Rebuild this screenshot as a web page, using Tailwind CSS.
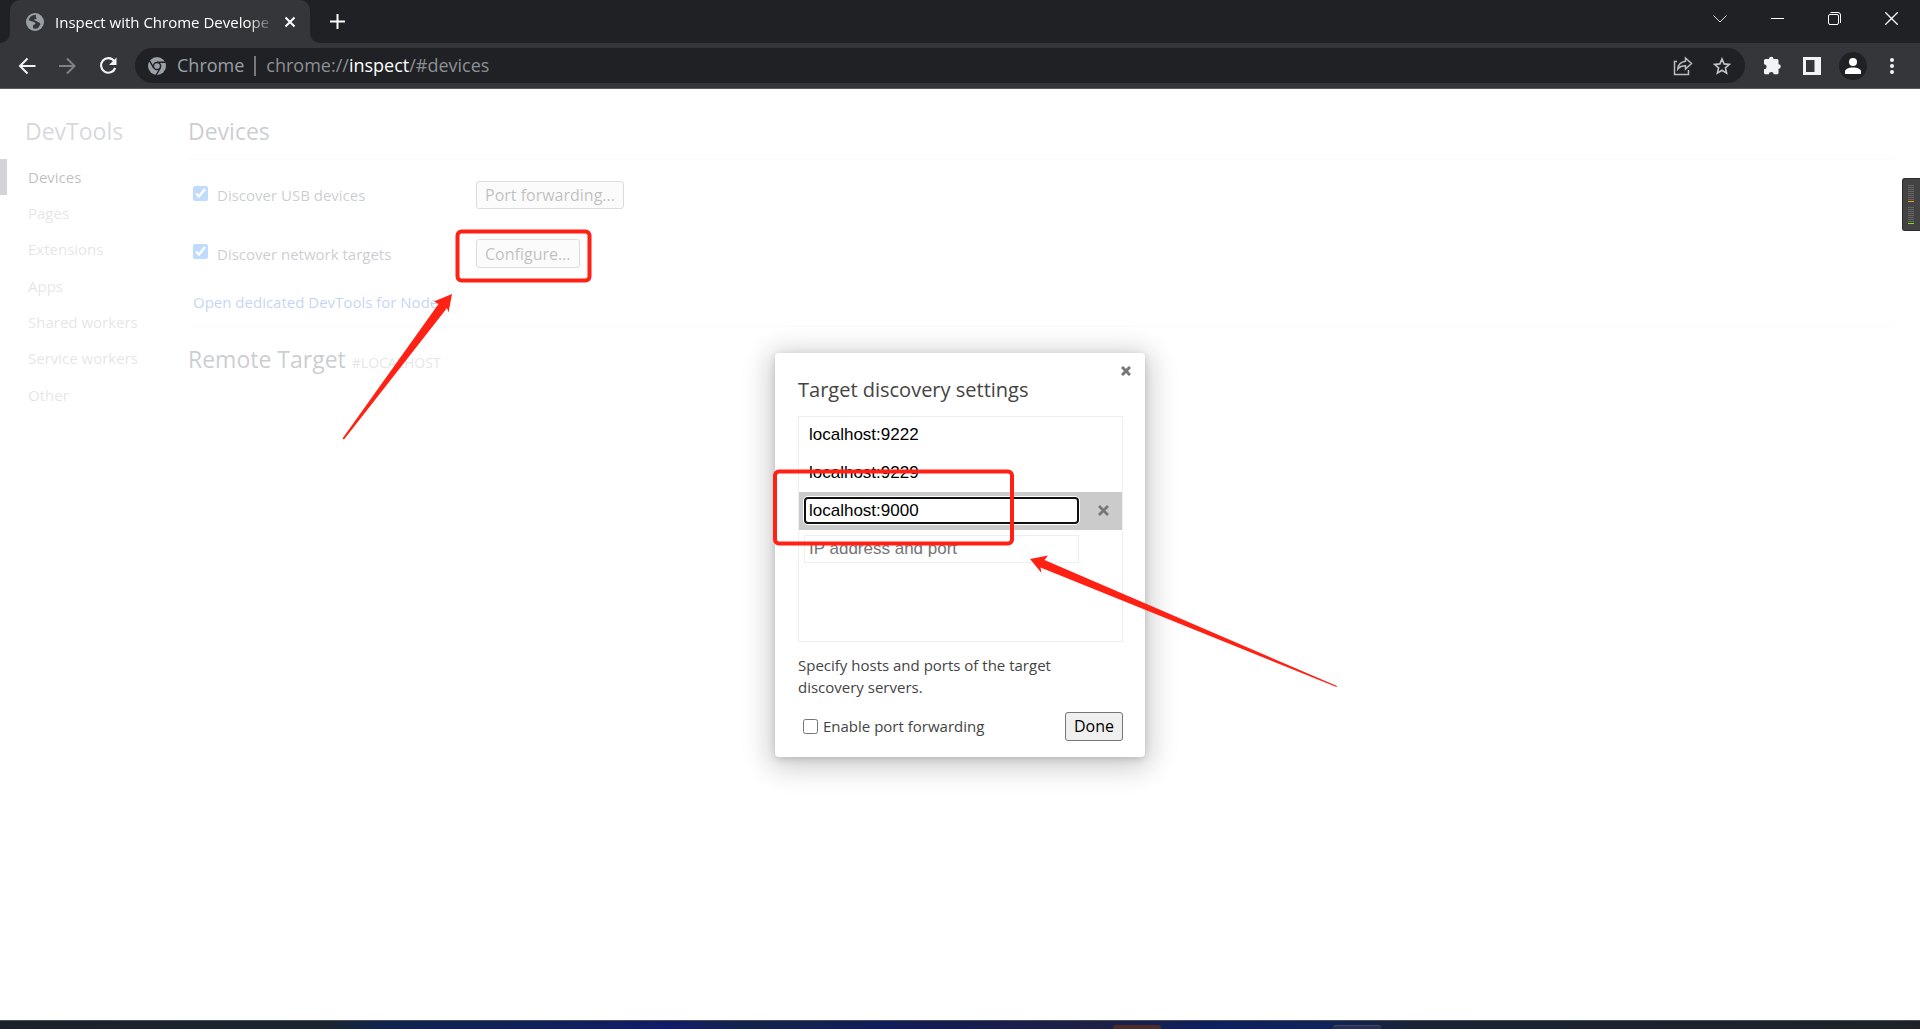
<!DOCTYPE html>
<html lang="en">
<head>
  <meta charset="UTF-8" />
  <meta name="viewport" content="width=device-width, initial-scale=1.0" />
  <title>Inspect with Chrome Developer Tools</title>
  <script src="https://cdn.jsdelivr.net/npm/@tailwindcss/browser@4"></script>
</head>
<body class="relative flex min-h-screen flex-col overflow-x-hidden bg-white font-['Open_Sans','Noto_Sans',sans-serif] text-[15px] text-[#303942]">

  <!-- Tab strip -->
  <header class="flex h-[43px] items-end bg-[#202124] text-white">
    <div class="relative ml-[10px] flex h-[43px] w-[300px] items-center rounded-t-[10px] bg-[#35363a] pl-4 pr-3">
      <svg class="absolute -left-[10px] bottom-0 size-[10px]" viewBox="0 0 10 10" fill="#35363a"><path d="M10 0v10H0A10 10 0 0 0 10 0z" /></svg>
      <svg class="absolute -right-[10px] bottom-0 size-[10px]" viewBox="0 0 10 10" fill="#35363a"><path d="M0 0v10h10A10 10 0 0 1 0 0z" /></svg>
      <svg class="size-[18px] shrink-0" viewBox="0 0 18 18">
        <circle cx="9" cy="9" r="9" fill="#9aa0a6" />
        <path d="M10 2c-3-.6-6.500 1.300-7.300 5 .8.800 1.800 1.300 3.300 1.200 1.200 0 1.500 1 2.600 1.200 1 .3 1.100 1.200.4 1.900-.8.700-1.600.3-2 1.200-.2.800.5 1.500 0 2.700 1.500.7 4 .7 5.300-.3.200-1.700 1.800-2 2-3.300.2-1-.3-1.900-1.400-2.200-1.300-.3-1.600-1.300-2.700-1.400-1.300 0-1.800-.6-2-1.400.7-.6 1.800-.1 2.300-.9.400-.7-.9-1.300-.8-2.100.1-.6.700-.8.300-1.600z" fill="#35363a" />
      </svg>
      <span class="ml-[11px] w-[220px] whitespace-nowrap text-[15px] leading-5 [mask-image:linear-gradient(to_right,black_88%,transparent)]">Inspect with Chrome Develope</span>
      <button class="ml-[9px] flex size-[12px] items-center justify-center" aria-label="Close tab">
        <svg class="size-[12px] shrink-0" viewBox="0 0 12 12" fill="none" stroke="#fff" stroke-width="2"><path d="M1.500 1.500l9 9M10.500 1.500l-9 9" /></svg>
      </button>
    </div>
    <button class="ml-5 flex h-full items-center" aria-label="New tab">
      <svg class="size-[15px]" viewBox="0 0 15 15" stroke="#fff" stroke-width="2"><path d="M7.500 0v15M0 7.500h15" /></svg>
    </button>
    <div class="ml-auto mr-[22px] flex h-[37px] items-center gap-11 self-start">
      <button aria-label="Search tabs"><svg class="h-[13px] w-[14px]" viewBox="0 0 14 13" fill="none" stroke="#ddd"><path d="M.5 3.500l6.500 6.500 6.500-6.500" /></svg></button>
      <button aria-label="Minimize"><svg class="size-[13px]" viewBox="0 0 13 13" stroke="#fff"><path d="M0 6.500h13" /></svg></button>
      <button aria-label="Restore"><svg class="size-[13px]" viewBox="0 0 13 13" fill="none" stroke="#fff"><rect x=".5" y="2.500" width="10" height="10" rx="1.500" /><path d="M2.500.5h7.500a2.500 2.500 0 0 1 2.500 2.500v8" /></svg></button>
      <button aria-label="Close"><svg class="size-[13px]" viewBox="0 0 13 13" stroke="#fff" stroke-width="1.300"><path d="M0 0l13 13M13 0L0 13" /></svg></button>
    </div>
  </header>

  <!-- Toolbar -->
  <nav class="flex h-[46px] items-center border-b border-[#5a5b5e] bg-[#35363a] pl-[18px] pr-[25px]">
    <button aria-label="Back"><svg class="size-[18px]" viewBox="0 0 18 18" fill="none" stroke="#f1f3f4" stroke-width="2"><path d="M17.500 9H2.500M9.500 1.500L2 9l7.500 7.500" /></svg></button>
    <button class="ml-[22px]" aria-label="Forward"><svg class="size-[18px]" viewBox="0 0 18 18" fill="none" stroke="#808184" stroke-width="2"><path d="M1 9h15M9 1.500L16.500 9 9 16.500" /></svg></button>
    <button class="ml-[22px]" aria-label="Reload"><svg class="size-[20px]" viewBox="0 0 20 20" fill="none"><path d="M16.200 5A7.300 7.300 0 1 0 17.200 12" stroke="#f1f3f4" stroke-width="2.200" /><path d="M18.500 1.500v7.500h-7.500z" fill="#f1f3f4" /></svg></button>
    <div class="ml-[17px] flex h-[35px] flex-1 items-center rounded-full bg-[#202124] pl-[13px] pr-[14px] text-[18px] text-[#9aa0a6]">
      <svg class="size-[18px]" viewBox="0 0 18 18">
        <circle cx="9" cy="9" r="9" fill="#9aa0a6" />
        <circle cx="9" cy="9" r="3.600" fill="none" stroke="#202124" stroke-width="1.500" />
        <path d="M9 5.200h8.200M5.700 11L1.600 3.900M12.300 11l-4.100 7" stroke="#202124" stroke-width="1.400" />
      </svg>
      <span class="ml-[11px]">Chrome</span>
      <span class="mx-[10px] h-5 w-[2px] bg-[#77797d]"></span>
      <input type="text" aria-label="Address" class="sr-only" value="chrome://inspect/#devices" />
      <span class="text-[#8c9095]">chrome://<span class="text-white">inspect</span>/#devices</span>
      <button class="ml-auto" aria-label="Share"><svg class="size-5" viewBox="0 0 20 20" fill="none" stroke="#b9bbbe" stroke-width="1.500"><path d="M4 5.500H1.500v13h14V14" /><path d="M12.500 2l6 5.500-6 5.500V9.800C9 9.800 6.500 10.800 4.800 13c.3-4 3-7 7.700-7.700z" /></svg></button>
      <button class="ml-5" aria-label="Bookmark"><svg class="size-[18px]" viewBox="0 0 18 18" fill="none" stroke="#c4c6c9" stroke-width="1.600"><path d="M9 2l2.100 4.900 5.300.5-4 3.500 1.200 5.200L9 13.300l-4.600 2.800 1.200-5.200-4-3.500 5.300-.5z" /></svg></button>
    </div>
    <button class="ml-[18px]" aria-label="Extensions"><svg class="size-[19px]" viewBox="0 0 19 19" fill="#f1f3f4"><path d="M1 4.500A1.500 1.500 0 0 1 2.500 3H6a2.300 2.300 0 0 1 4.600 0H14a1.500 1.500 0 0 1 1.500 1.500v3.700a2.300 2.300 0 0 1 0 4.600v4a1.500 1.500 0 0 1-1.500 1.500h-3.300a2.400 2.400 0 0 0-4.800 0H2.500A1.500 1.500 0 0 1 1 16.800v-3.500a2.500 2.500 0 0 0 0-5z" /></svg></button>
    <button class="ml-[21px]" aria-label="Side panel"><svg class="size-[18px]" viewBox="0 0 18 18"><path d="M0 0h18v18H0z" fill="#f1f3f4" /><path d="M3 3h8.500v12H3z" fill="#35363a" /></svg></button>
    <button class="ml-[18px] flex size-7 items-center justify-center rounded-full bg-[#202124]" aria-label="Profile"><svg class="size-4" viewBox="0 0 16 16" fill="#fff"><circle cx="8" cy="4" r="4" /><path d="M0 16v-2.500C0 11 4 9.500 8 9.500s8 1.500 8 4V16z" /></svg></button>
    <button class="ml-[22px]" aria-label="Menu"><svg class="h-[18px] w-[6px]" viewBox="0 0 6 18" fill="#f1f3f4"><circle cx="3" cy="3" r="2" /><circle cx="3" cy="9" r="2" /><circle cx="3" cy="15" r="2" /></svg></button>
  </nav>

  <!-- Inspect page -->
  <div class="relative flex flex-1">
    <aside class="w-[188px] shrink-0 pt-[26px]">
      <h1 class="pl-[25px] text-[23px] leading-8 text-[#5c6670]">DevTools</h1>
      <ul class="mt-3 flex h-[254px] flex-col justify-between text-[#999]">
        <li class="flex h-9 items-center border-l-[7px] border-[#4f4f67] pl-[21px] text-black"><a href="#devices">Devices</a></li>
        <li class="flex h-9 items-center pl-7"><a href="#pages">Pages</a></li>
        <li class="flex h-9 items-center pl-7"><a href="#extensions">Extensions</a></li>
        <li class="flex h-9 items-center pl-7"><a href="#apps">Apps</a></li>
        <li class="flex h-9 items-center pl-7"><a href="#shared-workers">Shared workers</a></li>
        <li class="flex h-9 items-center pl-7"><a href="#service-workers">Service workers</a></li>
        <li class="flex h-9 items-center pl-7"><a href="#other">Other</a></li>
      </ul>
    </aside>
    <main class="mr-[26px] flex-1 pt-[26px]">
      <h2 class="border-b border-[#eee] pb-3 text-[23px] leading-8">Devices</h2>
      <div class="mt-[21px] flex h-7 items-center pl-[5px]">
        <div class="flex w-[283px] items-center">
          <input type="checkbox" id="discover-usb" checked class="mb-1 size-[15px]" />
          <label for="discover-usb" class="ml-[9px] pt-px">Discover USB devices</label>
        </div>
        <button class="h-7 rounded-[3px] border border-[#767676] bg-[#efefef] px-2 text-[16px] leading-6 text-black">Port forwarding...</button>
      </div>
      <div class="mt-[30px] flex h-[29px] items-center pl-[5px]">
        <div class="flex w-[283px] items-center">
          <input type="checkbox" id="discover-network" checked class="mb-1 size-[15px]" />
          <label for="discover-network" class="ml-[9px] pt-px">Discover network targets</label>
        </div>
        <button class="h-[29px] rounded-[3px] border border-[#767676] bg-[#efefef] px-2 text-[16px] leading-6 text-black">Configure...</button>
      </div>
      <div class="mt-[22px] border-b border-[#eee] pb-3 pl-[5px] leading-6">
        <a href="#node-frontend" class="text-[#1155cc]">Open dedicated DevTools for Node</a>
      </div>
      <div class="mt-4 flex items-baseline gap-[6px]">
        <h2 class="text-[23px] leading-8">Remote Target</h2>
        <span class="text-[14px] text-[#999]">#LOCALHOST</span>
      </div>
    </main>

    <!-- Target discovery dialog over the dimmed page -->
    <div class="absolute inset-0 flex items-center justify-center bg-white/75">
      <section role="dialog" aria-labelledby="settings-title" class="relative w-[370px] rounded-[4px] bg-white pb-4 pl-[23px] pr-[22px] pt-[21px] text-[#444] shadow-[0_5px_29px_6px_rgba(0,0,0,0.2),0_2px_7px_rgba(0,0,0,0.15)]">
        <button class="absolute right-[14px] top-[13px]" aria-label="Close dialog"><svg class="size-[10px]" viewBox="0 0 10 10" stroke="#777" stroke-width="3"><path d="M1 1l8 8M9 1L1 9" /></svg></button>
        <h2 id="settings-title" class="text-[20px] leading-8">Target discovery settings</h2>
        <div class="mt-[10px] h-[226px] border border-[#eee] font-['Liberation_Sans',Arial,sans-serif] text-[17px] text-black">
          <ul class="grid h-[151px] grid-rows-4">
            <li class="flex items-center px-[5px]"><input type="text" aria-label="Target 1" value="localhost:9222" class="h-7 w-[275px] px-[5px]" /></li>
            <li class="flex items-center px-[5px]"><input type="text" aria-label="Target 2" value="localhost:9229" class="h-7 w-[275px] px-[5px]" /></li>
            <li class="flex items-center bg-[#cbcbcb] px-[5px]">
              <input type="text" aria-label="Target 3" value="localhost:9000" class="h-[27px] w-[275px] rounded-[4px] border-2 border-[#101010] bg-white px-[3px] ring-1 ring-white" />
              <button class="ml-[19px]" aria-label="Remove target"><svg class="size-[11px]" viewBox="0 0 11 11" stroke="#777" stroke-width="2.800"><path d="M1 1l9 9M10 1l-9 9" /></svg></button>
            </li>
            <li class="flex items-center px-[5px]"><input type="text" aria-label="New target" placeholder="IP address and port" class="h-7 w-[275px] border border-[#eee] px-1 placeholder:text-[#757575]" /></li>
          </ul>
        </div>
        <p class="mt-3 max-w-[300px] leading-[22px]">Specify hosts and ports of the target discovery servers.</p>
        <div class="mt-[14px] flex items-center pl-[5px]">
          <input type="checkbox" id="enable-forwarding" class="size-[15px]" />
          <label for="enable-forwarding" class="ml-[5px] pt-px">Enable port forwarding</label>
          <button class="ml-auto h-[29px] rounded-[3px] border border-[#767676] bg-[#efefef] px-2 text-[16px] leading-6 text-black">Done</button>
        </div>
      </section>
    </div>

    <!-- Level meter docked to the right edge -->
    <div class="absolute right-0 top-[89px] flex h-[53px] w-[18px] flex-col justify-between rounded-l-[3px] border border-r-0 border-[#2b2b2b] bg-[#434343] py-[6px] pl-[5px]">
      <div class="h-[17px] w-[6px] border-b border-[#f0a020] bg-[repeating-linear-gradient(to_bottom,#666_0_1px,transparent_1px_2px)]"></div>
      <div class="h-[17px] w-[6px] border-b border-[#7de020] bg-[repeating-linear-gradient(to_bottom,#666_0_1px,transparent_1px_2px)]"></div>
    </div>
  </div>

  <!-- Taskbar edge -->
  <footer class="flex h-[9px] items-end justify-end border-t border-[#46505c] bg-[linear-gradient(to_right,#1c2129_0%,#1b2530_17%,#10234e_20%,#10205a_28%,#111c66_35%,#13244a_39%,#111c5a_46%,#161c50_50%,#1e2044_57%,#0e1f5e_63%,#11235a_69%,#1a2332_74%,#1e2228_100%)] pr-[539px]">
    <span class="h-1 w-12 rounded-t-[3px] bg-[#4e2c2a]"></span>
    <span class="ml-[172px] h-1 w-12 rounded-t-[3px] border-t border-[#3f4a68] bg-[#2a3050]"></span>
  </footer>

  <!-- Marker boxes and arrows -->
  <svg class="pointer-events-none absolute left-0 top-0 h-[1029px] w-[1920px]" viewBox="0 0 1920 1029" fill="none">
    <g stroke="#ff2113" stroke-width="4">
      <rect x="457.500" y="231.500" width="132" height="49" rx="4" />
      <rect x="775" y="471.500" width="237" height="72" rx="4" />
    </g>
    <g fill="#ff2113">
      <path d="M452 294L434 301.500 438.500 304 342.500 438.500 344 439.500 447 308 448.500 312.500z" />
      <path d="M1030 559L1048 555.500 1044.500 560 1337 686 1336.500 687 1040.500 567.500 1041.500 573z" />
    </g>
  </svg>
</body>
</html>
